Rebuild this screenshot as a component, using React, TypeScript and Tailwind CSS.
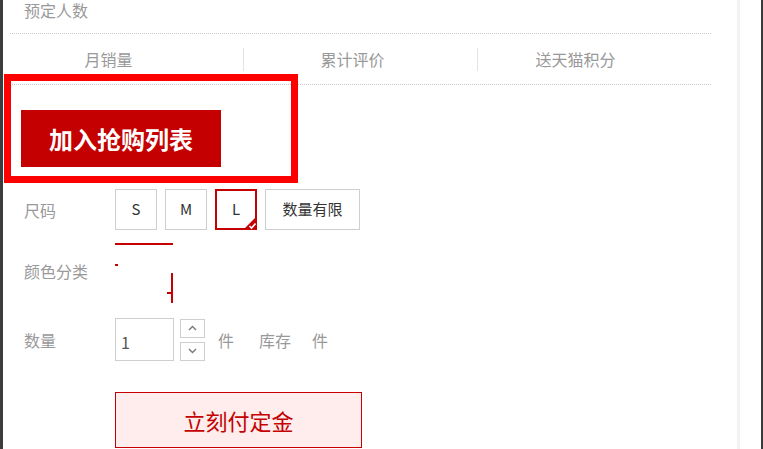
const font = { fontFamily: '"Noto Sans CJK SC", "Microsoft YaHei", sans-serif' };

function SizeBox({ label, selected = false, wide = false }: { label: string; selected?: boolean; wide?: boolean }) {
  return (
    <div
      className={`relative flex items-center justify-center h-[41px] text-[15px] text-[#333] bg-white ${
        wide ? 'w-[95px] px-2' : 'w-[42px]'
      } ${selected ? 'border-2 border-[#c40000]' : 'border border-[#cfcfcf]'}`}
    >
      {label}
      {selected && (
        <svg className="absolute right-[-2px] bottom-[-2px]" width="14" height="14" viewBox="0 0 14 14">
          <polygon points="14,0 14,14 0,14" fill="#c40000" />
          <polyline points="6.5,10 8.5,12 12.5,7.5" fill="none" stroke="#fff" strokeWidth="1.6" />
        </svg>
      )}
    </div>
  );
}

function Chevron({ up }: { up?: boolean }) {
  return (
    <div className="w-[25px] h-[19px] border border-[#cfcfcf] bg-white flex items-center justify-center">
      <svg width="9" height="6" viewBox="0 0 9 6">
        <polyline
          points={up ? '1,5 4.5,1.5 8,5' : '1,1 4.5,4.5 8,1'}
          fill="none"
          stroke="#777"
          strokeWidth="1.4"
        />
      </svg>
    </div>
  );
}

export default function App() {
  return (
    <div className="w-[763px] h-[449px] overflow-hidden bg-white flex relative" style={font}>
      {/* left edge */}
      <div className="w-[3px] bg-[#3c3c3c]" />

      {/* main panel */}
      <div className="w-[734px]">
        {/* 预定人数 */}
        <div className="h-[33px] pl-[21px] text-[16px] leading-[20px] text-[#999]">预定人数</div>
        <div className="ml-[7px] w-[701px] border-t border-dotted border-[#c8c8c8]" />

        {/* stats */}
        <div className="ml-[7px] w-[701px] h-[50px] flex items-center text-[16px] text-[#999]">
          <div className="w-[233px] text-center pr-[36px]">月销量</div>
          <div className="w-px h-[23px] bg-[#e3e3e3]" />
          <div className="w-[233px] text-center pr-[16px]">累计评价</div>
          <div className="w-px h-[23px] bg-[#e3e3e3]" />
          <div className="w-[233px] text-center pr-[38px]">送天猫积分</div>
        </div>
        <div className="ml-[7px] w-[701px] border-t border-dotted border-[#c8c8c8]" />

        {/* 加入抢购列表 */}
        <div className="mt-[25px] ml-[18px] w-[200px] h-[57px] bg-[#c40000] text-white text-[24px] font-bold flex items-center justify-center">
          加入抢购列表
        </div>

        {/* 尺码 */}
        <div className="mt-[22px] flex items-center pl-[21px]">
          <div className="w-[91px] text-[16px] text-[#999]">尺码</div>
          <div className="flex gap-[8px]">
            <SizeBox label="S" />
            <SizeBox label="M" />
            <SizeBox label="L" selected />
            <SizeBox label="数量有限" wide />
          </div>
        </div>
        <div className="ml-[112px] mt-[13px] w-[58px] h-[2px] bg-[#c40000]" />

        {/* 颜色分类 */}
        <div className="mt-[14px] flex pl-[21px] h-[43px]">
          <div className="w-[91px] text-[16px] text-[#999] leading-[24px]">颜色分类</div>
          <div className="relative w-[60px]">
            <div className="absolute left-0 top-[5px] w-[3px] h-[2px] bg-[#c40000]" />
            <div className="absolute left-[56px] top-[14px] w-[2px] h-[30px] bg-[#c40000]" />
            <div className="absolute left-[52px] top-[33px] w-[4px] h-[2px] bg-[#c40000]" />
          </div>
        </div>

        {/* 数量 */}
        <div className="mt-[16px] flex items-center pl-[21px]">
          <div className="w-[91px] text-[16px] text-[#999]">数量</div>
          <div className="w-[59px] h-[43px] border border-[#cfcfcf] flex items-center pl-[5px] pt-[4px] text-[16px] text-[#555]">
            1
          </div>
          <div className="ml-[6px] flex flex-col gap-[4px]">
            <Chevron up />
            <Chevron />
          </div>
          <div className="ml-[13px] text-[16px] text-[#999] flex gap-[25px]">
            <span>件</span>
            <span>库存</span>
            <span className="-ml-[4px]">件</span>
          </div>
        </div>

        {/* 立刻付定金 */}
        <div className="mt-[31px] ml-[112px] w-[247px] h-[56px] border border-[#c40000] bg-[#ffeded] text-[#c40000] text-[22px] flex items-center justify-center">
          立刻付定金
        </div>
      </div>

      {/* right gutter */}
      <div className="w-[3px] bg-[#f2f2f2]" />
      <div className="w-[21px] bg-white" />
      <div className="w-[2px] bg-[#3c3c3c]" />

      {/* annotation highlight */}
      <div className="absolute left-[4px] top-[74px] w-[294px] h-[109px] border-[7px] border-[#ff0000]" />
    </div>
  );
}
